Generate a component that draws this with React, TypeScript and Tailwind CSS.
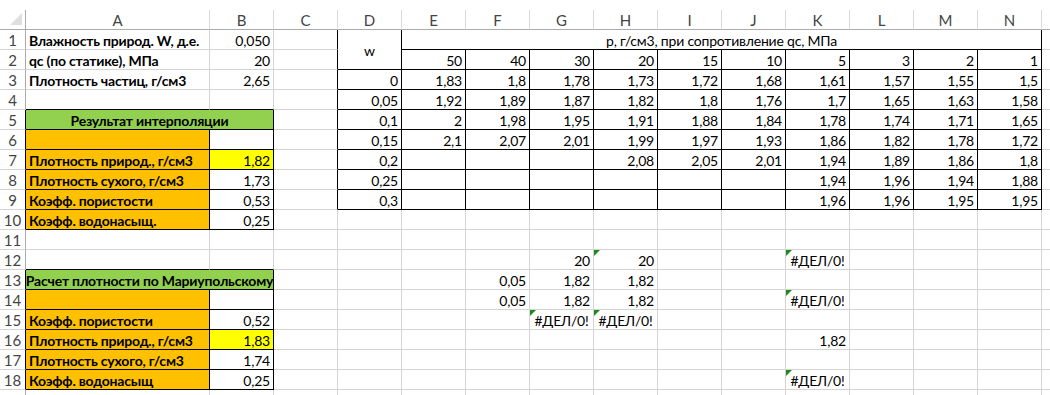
import React from "react";

type Cell = {
  v?: string;
  a?: "l" | "r" | "c";
  b?: boolean;
  bg?: "g" | "o" | "y" | "w";
  tri?: boolean;
  rs?: number;
  cs?: number;
};

const COLS = ["A", "B", "C", "D", "E", "F", "G", "H", "I", "J", "K", "L", "M", "N"];

const data: Record<string, Cell> = {};
const set = (r: number, c: number, cell: Cell) => {
  data[`${r}-${c}`] = cell;
};

// Left block
set(1, 0, { v: "Влажность природ. W, д.е.", a: "l", b: true });
set(1, 1, { v: "0,050", a: "r" });
set(2, 0, { v: "qc (по статике), МПа", a: "l", b: true });
set(2, 1, { v: "20", a: "r" });
set(3, 0, { v: "Плотность частиц, г/см3", a: "l", b: true });
set(3, 1, { v: "2,65", a: "r" });
set(5, 0, { v: "Результат интерполяции", a: "c", b: true, bg: "g", cs: 2 });
set(6, 0, { bg: "o" });
set(6, 1, { bg: "w" });
set(7, 0, { v: "Плотность природ., г/см3", a: "l", b: true, bg: "o" });
set(7, 1, { v: "1,82", a: "r", bg: "y" });
set(8, 0, { v: "Плотность сухого, г/см3", a: "l", b: true, bg: "o" });
set(8, 1, { v: "1,73", a: "r" });
set(9, 0, { v: "Коэфф. пористости", a: "l", b: true, bg: "o" });
set(9, 1, { v: "0,53", a: "r" });
set(10, 0, { v: "Коэфф. водонасыщ.", a: "l", b: true, bg: "o" });
set(10, 1, { v: "0,25", a: "r" });

set(13, 0, { v: "Расчет плотности по Мариупольскому", a: "c", b: true, bg: "g", cs: 2 });
set(14, 0, { bg: "o" });
set(14, 1, { bg: "w" });
set(15, 0, { v: "Коэфф. пористости", a: "l", b: true, bg: "o" });
set(15, 1, { v: "0,52", a: "r" });
set(16, 0, { v: "Плотность природ., г/см3", a: "l", b: true, bg: "o" });
set(16, 1, { v: "1,83", a: "r", bg: "y" });
set(17, 0, { v: "Плотность сухого, г/см3", a: "l", b: true, bg: "o" });
set(17, 1, { v: "1,74", a: "r" });
set(18, 0, { v: "Коэфф. водонасыщ", a: "l", b: true, bg: "o" });
set(18, 1, { v: "0,25", a: "r" });

// Table
set(1, 3, { v: "w", a: "c", rs: 2 });
set(1, 4, { v: "р, г/см3, при сопротивление qc, МПа", a: "c", cs: 10 });
const heads = ["50", "40", "30", "20", "15", "10", "5", "3", "2", "1"];
heads.forEach((h, i) => set(2, 4 + i, { v: h, a: "r" }));
const tbl = [
  ["0", "1,83", "1,8", "1,78", "1,73", "1,72", "1,68", "1,61", "1,57", "1,55", "1,5"],
  ["0,05", "1,92", "1,89", "1,87", "1,82", "1,8", "1,76", "1,7", "1,65", "1,63", "1,58"],
  ["0,1", "2", "1,98", "1,95", "1,91", "1,88", "1,84", "1,78", "1,74", "1,71", "1,65"],
  ["0,15", "2,1", "2,07", "2,01", "1,99", "1,97", "1,93", "1,86", "1,82", "1,78", "1,72"],
  ["0,2", "", "", "", "2,08", "2,05", "2,01", "1,94", "1,89", "1,86", "1,8"],
  ["0,25", "", "", "", "", "", "", "1,94", "1,96", "1,94", "1,88"],
  ["0,3", "", "", "", "", "", "", "1,96", "1,96", "1,95", "1,95"],
];
tbl.forEach((row, ri) => row.forEach((v, ci) => set(3 + ri, 3 + ci, { v, a: "r" })));

// Loose cells
set(12, 6, { v: "20", a: "r" });
set(12, 7, { v: "20", a: "r", tri: true });
set(12, 10, { v: "#ДЕЛ/0!", a: "c", tri: true });
set(13, 5, { v: "0,05", a: "r" });
set(13, 6, { v: "1,82", a: "r" });
set(13, 7, { v: "1,82", a: "r" });
set(14, 5, { v: "0,05", a: "r" });
set(14, 6, { v: "1,82", a: "r" });
set(14, 7, { v: "1,82", a: "r" });
set(14, 10, { v: "#ДЕЛ/0!", a: "c", tri: true });
set(15, 6, { v: "#ДЕЛ/0!", a: "c", tri: true });
set(15, 7, { v: "#ДЕЛ/0!", a: "c", tri: true });
set(16, 10, { v: "1,82", a: "r" });
set(18, 10, { v: "#ДЕЛ/0!", a: "c", tri: true });

const boxed = (r: number, c: number) =>
  (r >= 5 && r <= 10 && c >= 0 && c <= 1) ||
  (r >= 13 && r <= 18 && c >= 0 && c <= 1) ||
  (r >= 1 && r <= 9 && c >= 3 && c <= 13);

const covered = new Set<string>();
Object.entries(data).forEach(([k, cell]) => {
  const [r, c] = k.split("-").map(Number);
  const rs = cell.rs ?? 1;
  const cs = cell.cs ?? 1;
  for (let i = 0; i < rs; i++)
    for (let j = 0; j < cs; j++) if (i || j) covered.add(`${r + i}-${c + j}`);
});

const FONT = { fontFamily: "Lato, 'Noto Sans', 'Liberation Sans', sans-serif" };

function Tri() {
  return (
    <svg className="absolute left-0 top-0" width="6" height="6" viewBox="0 0 6 6">
      <polygon points="0,0 6,0 0,6" fill="#1e8a1e" />
    </svg>
  );
}

function CellView({ r, c }: { r: number; c: number }) {
  const cell = data[`${r}-${c}`] ?? {};
  const rs = cell.rs ?? 1;
  const cs = cell.cs ?? 1;
  const rightBlack = boxed(r, c) || boxed(r, c + cs);
  const bottomBlack = boxed(r, c) || boxed(r + rs, c);
  const bg =
    cell.bg === "g"
      ? "bg-[#92d050]"
      : cell.bg === "o"
      ? "bg-[#ffc000]"
      : cell.bg === "y"
      ? "bg-[#ffff00]"
      : "bg-white";
  const align = cell.a === "r" ? "justify-end" : cell.a === "c" ? "justify-center" : "justify-start";
  const span = cs === 10 ? "col-span-10" : cs === 2 ? "col-span-2" : "";
  const rspan = rs === 2 ? "row-span-2" : "";
  return (
    <div
      className={`relative flex items-center ${align} ${span} ${rspan} ${bg} border-r border-b ${
        rightBlack ? "border-r-black" : "border-r-[#d4d4d4]"
      } ${bottomBlack ? "border-b-black" : "border-b-[#d4d4d4]"} px-[3px] pt-[2px] whitespace-nowrap text-[14px] tracking-[-0.2px] leading-none text-black ${
        cell.b ? "font-bold" : ""
      }`}
    >
      {cell.tri && <Tri />}
      {cell.v}
    </div>
  );
}

export default function App() {
  const rows: React.ReactNode[] = [];
  for (let r = 1; r <= 18; r++) {
    rows.push(
      <div
        key={`h${r}`}
        className={`flex items-center justify-center border-r border-b border-b-[#d4d4d4] ${
          boxed(r, 0) ? "border-r-black" : "border-r-[#ababab]"
        } text-[15px] leading-none text-[#444] pt-[2px]`}
      >
        {r}
      </div>
    );
    for (let c = 0; c < 14; c++) {
      if (covered.has(`${r}-${c}`)) continue;
      rows.push(<CellView key={`${r}-${c}`} r={r} c={c} />);
    }
    rows.push(<div key={`o${r}`} className="border-b border-b-[#d4d4d4] bg-white" />);
  }

  return (
    <div className="w-[1050px] h-[395px] overflow-hidden bg-white" style={FONT}>
      <div className="grid grid-cols-[26px_184px_repeat(13,64px)_8px] grid-rows-[10px_repeat(19,20px)_5px]">
        <div className="col-span-16 bg-white" />
        <div className="relative flex items-end justify-end pr-[3px] pb-[4px] border-r border-b border-r-[#ababab] border-b-[#ababab]">
          <svg width="12" height="12" viewBox="0 0 12 12">
            <polygon points="12,0 12,12 0,12" fill="#dfdfdf" />
          </svg>
        </div>
        {COLS.map((l) => (
          <div
            key={l}
            className="flex items-center justify-center border-r border-b border-r-[#dadada] border-b-[#ababab] text-[15px] leading-none text-[#444] pt-[2px]"
          >
            {l}
          </div>
        ))}
        <div className="border-b border-b-[#ababab]" />
        {rows}
        <div className="border-r border-r-[#ababab]" />
        {COLS.map((l) => (
          <div key={`p${l}`} className="border-r border-r-[#d4d4d4]" />
        ))}
        <div />
      </div>
    </div>
  );
}
